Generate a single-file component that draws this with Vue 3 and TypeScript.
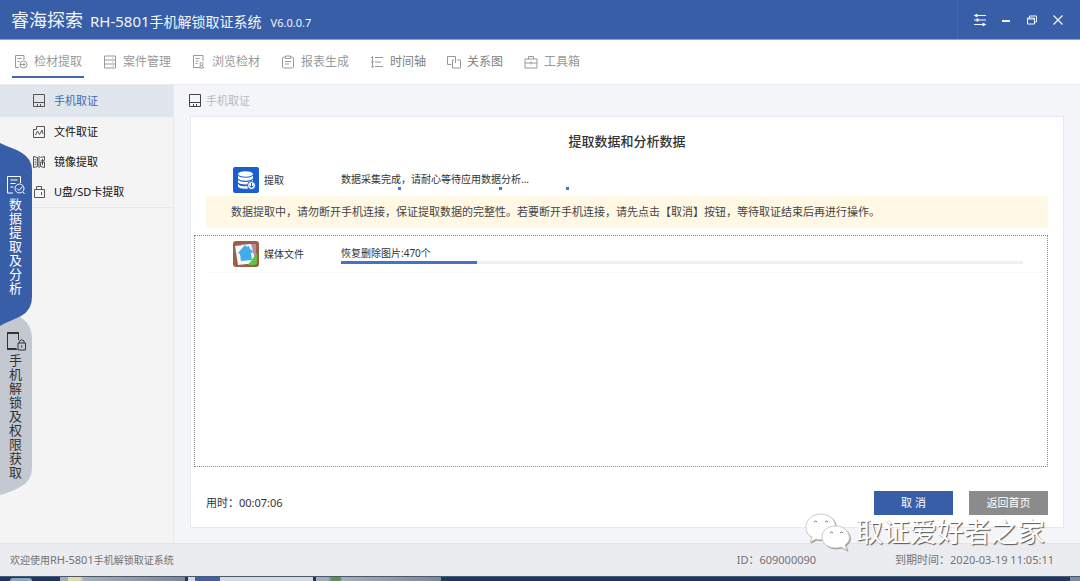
<script setup lang="ts">
import { ref } from 'vue'

interface Item {
  id: string
  label: string
  strong?: boolean
}

const navItems: Item[] = [
  { id: 'extract', label: '检材提取' },
  { id: 'cases', label: '案件管理' },
  { id: 'browse', label: '浏览检材' },
  { id: 'report', label: '报表生成' },
  { id: 'timeline', label: '时间轴', strong: true },
  { id: 'relation', label: '关系图', strong: true },
  { id: 'tools', label: '工具箱' },
]

const sideItems: Item[] = [
  { id: 'phone', label: '手机取证' },
  { id: 'file', label: '文件取证' },
  { id: 'image', label: '镜像提取' },
  { id: 'usb', label: 'U盘/SD卡提取' },
]

const activeNav = ref('extract')
const activeSide = ref('phone')
const progress = ref(20)
</script>

<template>
  <div class="app">
    <header class="titlebar">
      <strong class="brand">睿海探索</strong>
      <h1 class="product"><span class="model">RH-5801</span>手机解锁取证系统</h1>
      <span class="version">V6.0.0.7</span>
      <div class="window-controls">
        <button type="button" aria-label="设置">
          <svg width="14" height="14" viewBox="0 0 14 14"><path d="M1 2.500h12M1 7h12M1 11.500h12" /><path d="M3.500 1v3M4.500 5.500v3M10.500 10v3" stroke-width="2" /></svg>
        </button>
        <button type="button" aria-label="最小化">
          <svg width="14" height="14" viewBox="0 0 14 14"><path d="M3 8h8" stroke-width="2" /></svg>
        </button>
        <button type="button" aria-label="还原">
          <svg width="14" height="14" viewBox="0 0 14 14"><path d="M2.500 5h7v6h-7zM2.500 6h7M4.500 5V3h7v6h-2" /></svg>
        </button>
        <button type="button" aria-label="关闭">
          <svg width="14" height="14" viewBox="0 0 14 14"><path d="M2.500 2.500l9 9M11.500 2.500l-9 9" stroke-width="1.300" /></svg>
        </button>
      </div>
    </header>

    <nav class="topnav">
      <button
        v-for="item in navItems"
        :key="item.id"
        type="button"
        class="nav-item"
        :class="{ active: item.id === activeNav, strong: item.strong }"
        @click="activeNav = item.id"
      >
        <svg width="14" height="14" viewBox="0 0 14 14">
          <template v-if="item.id === 'extract'">
            <path d="M5 12.500H1.500v-12h8.500V5M3.500 3.500h4M3.500 6.500h2" /><circle cx="9.500" cy="9.500" r="3.500" /><path d="M6 9.500h5M9.500 8l1.500 1.500L9.500 11" />
          </template>
          <path v-else-if="item.id === 'cases'" d="M1.500 1h11v12h-11zM1.500 5h11M1.500 9h11M9.500 3h1M9.500 7h1M9.500 11h1" />
          <path v-else-if="item.id === 'browse'" d="M7 12.500H1.500v-12h9.500V6M3.500 3.500h4M3.500 6h3M3.500 8.500h2M9.500 7.500a1 1 0 0 1 0 3a1 1 0 0 1 0-3M7.500 13c0-3 4-3 4 0z" />
          <path v-else-if="item.id === 'report'" d="M4.500 2h-2l-1 1v9l1 1h9l1-1V3l-1-1h-2M4.500 1h5v2.500h-5zM4 6.500h6M4 9h4" />
          <path v-else-if="item.id === 'timeline'" d="M1 3l1.500-1.500V12M5 2.500h8M5 7h6M5 11.500h8M1 7h3M1 12h3" />
          <path v-else-if="item.id === 'relation'" d="M4.500 9.500h-4v-8h8v3M7 5H5.500v8h8V5H10M8.500 4v4" />
          <path v-else d="M1 4h12v9H1zM4.500 4V1.500h5V4M1 8h4M9 8h4M5 8h4M7 6.500v3" />
        </svg>
        <span>{{ item.label }}</span>
      </button>
    </nav>

    <div class="body">
      <aside class="sidebar">
        <ul class="side-list">
          <li v-for="item in sideItems" :key="item.id">
            <button
              type="button"
              class="side-item"
              :class="{ active: item.id === activeSide }"
              @click="activeSide = item.id"
            >
              <svg width="14" height="14" viewBox="0 0 14 14">
                <path v-if="item.id === 'phone'" d="M1.500 .500h11v12h-11zM1.500 8.500h11M5.500 10v2.500M8.500 10v2.500" />
                <path v-else-if="item.id === 'file'" d="M1.500 4.500h3v-3h8v11h-11zM3.500 10l2-4 2 3.500 2.500-4.500 1 4" />
                <path v-else-if="item.id === 'image'" d="M1.500 1.500l4 1v9l-4 1zM2.500 4.500l2 .500M2.500 7h2M2.500 9.500l2-.500M7 1v12M8.500 2.500l4-1v4l-4 .500M12.500 7l-4 .500v4l4 1zM10.500 4v6" />
                <path v-else d="M2.500 4.500h10v8h-10zM4.500 4.500v-3h5v3M9.500 7v3" />
              </svg>
              <span>{{ item.label }}</span>
            </button>
          </li>
        </ul>

        <div class="mode-tabs">
          <button type="button" class="mode-tab data-tab">
            <svg class="tab-shape" viewBox="0 0 33 184" preserveAspectRatio="none"><path d="M0 0C8 4 16 6 22 10Q32 16 32 27V154Q32 167 21 173C14 177 8 178 0 183Z" /></svg>
            <svg class="tab-icon" width="20" height="20" viewBox="0 0 20 20"><path d="M7 18H1.500V1.500h13V8M4.500 5h7M4.500 8.500h5M4.500 12h3M17 17l1.500 2" /><circle cx="13.500" cy="13.500" r="4.500" /><path d="M11 13.500l2 2 3.500-4" /></svg>
            <span class="tab-label">数据提取及分析</span>
          </button>
          <button type="button" class="mode-tab unlock-tab">
            <svg class="tab-shape" viewBox="0 0 33 184" preserveAspectRatio="none"><path d="M0 0H20Q32 7 32 22V151Q32 164 20 170C13 174 7 176 0 178Z" /></svg>
            <svg class="tab-icon" width="20" height="20" viewBox="0 0 20 20"><path d="M11 18.500H1.500v-17h11V9" /><path d="M1.500 2h11M1.500 18h9" stroke-width="2" /><path d="M12 12h7.500v7H12zM13.500 12v-2q2.200-2.500 4.500 0v2M15.700 14.500v2" /></svg>
            <span class="tab-label">手机解锁及权限获取</span>
          </button>
        </div>
      </aside>

      <main class="content">
        <div class="crumb">
          <svg width="14" height="14" viewBox="0 0 14 14"><path d="M1.500 .500h11v12h-11zM1.500 8.500h11M5.500 10v2.500M8.500 10v2.500" /></svg>
          <span>手机取证</span>
        </div>

        <section class="panel">
          <h2 class="panel-title">提取数据和分析数据</h2>

          <div class="task">
            <svg class="task-icon" width="26" height="26" viewBox="0 0 26 26">
              <rect width="26" height="26" rx="2" fill="#1b5fce" />
              <g fill="#fff">
                <ellipse cx="12.500" cy="7" rx="7.500" ry="2.800" />
                <path d="M5 8.500c2 3 13 3 15 0v3c-2 3-13 3-15 0zM5 12.800c2 3 13 3 15 0v2.500c-2 3-13 3-15 0zM5 16.800c2 3 8 3 10 1.500v3.200c-4 .600-9 0-10-1.700z" />
              </g>
              <circle cx="18.500" cy="18.500" r="4" fill="#fff" stroke="#1b5fce" />
              <path d="M18.500 16v4M16.500 18.500l2 2 2-2" fill="none" stroke="#1b5fce" />
            </svg>
            <span class="task-name">提取</span>
            <div class="task-status">
              <p>数据采集完成，请耐心等待应用数据分析...</p>
              <div class="busy"><i class="lead"></i><i></i><i class="trail"></i></div>
            </div>
          </div>

          <p class="notice">数据提取中，请勿断开手机连接，保证提取数据的完整性。若要断开手机连接，请先点击【取消】按钮，等待取证结束后再进行操作。</p>

          <div class="task-list">
            <div class="task">
              <svg class="task-icon" width="26" height="26" viewBox="0 0 26 26">
                <rect width="26" height="26" rx="3" fill="#9b6049" />
                <path d="M8 3h15v19z" fill="#b98a9c" />
                <path d="M2 5l16-2 5 19-18 2z" fill="#f5f8f3" />
                <path d="M5 12l7-8 2 2 2-1 1 3 4 3-3 1 1 7-11 1-1-7z" fill="#41aeea" />
                <path d="M15 24l9-12v9q0 3-3 3z" fill="#63bf46" />
              </svg>
              <span class="task-name">媒体文件</span>
              <div class="task-status">
                <p>恢复删除图片:470个</p>
                <div class="track" role="progressbar" aria-label="媒体文件" :aria-valuenow="progress">
                  <div class="bar" :style="{ width: progress + '%' }"></div>
                </div>
              </div>
            </div>
          </div>

          <div class="panel-foot">
            <span class="elapsed">用时：00:07:06</span>
            <button type="button" class="btn primary">取 消</button>
            <button type="button" class="btn muted">返回首页</button>
          </div>
        </section>
      </main>
    </div>

    <footer class="statusbar">
      <span class="welcome">欢迎使用<span class="model">RH-5801</span>手机解锁取证系统</span>
      <span class="device">ID：609000090</span>
      <span>到期时间：2020-03-19 11:05:11</span>
    </footer>

    <div class="taskbar">
      <i class="start"></i>
      <i class="window folder"></i>
      <i class="window current"></i>
      <i class="window green"></i>
      <i class="corner"></i>
    </div>

    <div class="watermark">
      <svg width="46" height="38" viewBox="0 0 46 38">
        <path d="M16 1C7 1 1 7 1 14c0 5 2 8 6 10l-2 5 6-3c3 1 5 1 8 0C31 25 32 15 29 8 26 3 21 1 16 1z" />
        <path d="M31 13c-9 0-14 5-14 11 0 8 9 13 19 10l6 3-2-5c4-3 5-6 4-10-2-6-7-9-13-9z" />
        <path class="eyes" d="M9 9q2-2 3 0M20 9q2-2 3 0M25 20q2-2 3 0M35 20q2-2 3 0" />
      </svg>
      <span>取证爱好者之家</span>
    </div>
  </div>
</template>

<style>
body {
  margin: 0;
}
</style>

<style scoped>
.app {
  position: relative;
  display: flex;
  flex-direction: column;
  min-height: 100vh;
  overflow: hidden;
  color: #333;
  background: #f4f5f9;
  font-family: "Noto Sans", "Noto Sans CJK SC", sans-serif;
  font-size: 11px;
  line-height: 16px;
}

* {
  box-sizing: border-box;
}

h1, h2, p, ul {
  margin: 0;
  padding: 0;
  font-weight: 400;
}

button {
  padding: 0;
  border: 0;
  background: none;
  color: inherit;
  font: inherit;
  cursor: pointer;
}

svg {
  flex: none;
  fill: none;
  stroke: currentColor;
}

.titlebar {
  display: flex;
  align-items: center;
  height: 40px;
  padding-left: 11px;
  border-bottom: 1px solid #8ba4d5;
  background: #385ea8;
  color: #f2f5fb;
}

.brand {
  font-size: 18px;
  font-weight: 400;
  line-height: 24px;
}

.product {
  margin-left: 7px;
  padding-top: 4px;
  font-size: 14px;
  line-height: 20px;
}

.product .model {
  font-size: 15px;
}

.version {
  margin-left: 9px;
  padding-top: 6px;
}

.window-controls {
  display: flex;
  align-self: stretch;
  align-items: center;
  gap: 12px;
  margin-left: auto;
  padding: 0 15px;
  border-left: 1px solid #4368ae;
}

.window-controls button {
  display: flex;
}

.topnav {
  display: flex;
  gap: 17px;
  height: 45px;
  padding: 8px 12px 6px;
  border-bottom: 1px solid #e9ebef;
  background: #fff;
  color: #999;
  font-size: 12px;
}

.nav-item {
  display: flex;
  align-items: center;
  gap: 6px;
  padding: 0 2px;
  border-bottom: 2px solid transparent;
}

.nav-item.active {
  border-bottom-color: #4468ae;
}

.nav-item.strong {
  color: #808080;
}

.nav-item svg {
  color: #999;
}

.body {
  display: flex;
  flex: 1;
}

.sidebar {
  position: relative;
  flex: none;
  width: 174px;
  border-right: 1px solid #e8e8eb;
  background: #f4f4f5;
}

.side-list {
  border-bottom: 1px solid #e9e9eb;
  list-style: none;
}

.side-item {
  display: flex;
  align-items: center;
  gap: 8px;
  width: 100%;
  height: 30px;
  padding-left: 32px;
  color: #111;
  text-align: left;
}

.side-item svg {
  color: #555;
}

.side-item.active {
  height: 32px;
  background: #e1e5ee;
  color: #4568ad;
}

.mode-tabs {
  position: absolute;
  top: 58px;
  left: 0;
  width: 33px;
}

.mode-tab {
  position: relative;
  display: flex;
  flex-direction: column;
  align-items: center;
  width: 33px;
  height: 184px;
  padding: 32px 2px 0 0;
}

.data-tab {
  z-index: 1;
  color: #fff;
}

.unlock-tab {
  margin-top: -10px;
  padding-top: 14px;
  color: #333;
}

.tab-shape {
  position: absolute;
  inset: 0;
  width: 100%;
  height: 100%;
  stroke: none;
}

.data-tab .tab-shape {
  fill: #385ea8;
}

.unlock-tab .tab-shape {
  fill: #c4c8d0;
}

.tab-icon,
.tab-label {
  position: relative;
}

.tab-label {
  width: 13px;
  margin-top: 2px;
  font-size: 13px;
  line-height: 14px;
  overflow-wrap: anywhere;
}

.content {
  display: flex;
  flex: 1;
  flex-direction: column;
  min-width: 0;
  padding: 8px 16px 15px 16px;
}

.crumb {
  display: flex;
  align-items: center;
  gap: 4px;
  height: 16px;
  margin-left: -2px;
  color: #b8b9bd;
}

.crumb svg {
  color: #444;
}

.panel {
  display: flex;
  flex: 1;
  flex-direction: column;
  margin-top: 7px;
  padding: 14px 15px 12px 3px;
  border: 1px solid #e8e9ec;
  background: #fff;
}

.panel-title {
  padding-left: 12px;
  font-size: 13px;
  font-weight: 500;
  line-height: 20px;
  text-align: center;
}

.task {
  display: grid;
  grid-template-columns: 26px 72px 1fr;
  column-gap: 5px;
  align-items: center;
  margin-left: 39px;
}

.panel > .task {
  margin-top: 16px;
}

.task-icon {
  stroke: none;
}

.task-name,
.task-status {
  font-size: 10px;
}

.busy {
  display: flex;
  gap: 98px;
  height: 3px;
}

.busy i {
  width: 3px;
  height: 3px;
  background: #4a74cc;
}

.busy .lead {
  margin-left: 57px;
}

.busy .trail {
  margin-left: -34px;
}

.notice {
  margin: 3px 0 0 12px;
  padding: 8px 25px;
  background: #fff8e5;
  color: #444;
}

.task-list {
  flex: 1;
  margin-top: 7px;
  border: 1px dotted #888;
}

.task-list .task {
  margin-left: 12px;
  padding: 5px 24px 5px 26px;
  border-bottom: 1px solid #f8f8f9;
}

.track {
  height: 3px;
  background: #edf1f5;
}

.bar {
  height: 100%;
  background: #4671c6;
}

.panel-foot {
  display: flex;
  align-items: center;
  gap: 16px;
  margin: 24px 0 0 12px;
}

.elapsed {
  margin-right: auto;
}

.btn {
  width: 79px;
  height: 24px;
  color: #fff;
}

.primary {
  background: #385ea8;
}

.muted {
  background: #8b8b8b;
}

.statusbar {
  display: flex;
  align-items: center;
  height: 33px;
  padding: 0 26px 0 10px;
  border-top: 1px solid #e2e3e6;
  background: #ebecf0;
  color: #737373;
}

.welcome {
  margin-right: auto;
  font-size: 10px;
}

.welcome .model {
  font-size: 11px;
}

.device {
  margin-right: 79px;
}

.taskbar {
  display: flex;
  gap: 3px;
  height: 5px;
  border-top: 1px solid #4c5a70;
  background: #19376b;
}

.start {
  width: 22px;
  margin: 1px 25px 0 10px;
  border-radius: 11px 11px 0 0;
  background: #84a8cb;
}

.window {
  width: 125px;
  background: linear-gradient(90deg, #a4adba, #7b879b);
}

.folder {
  background: linear-gradient(90deg, #a4adba 8px, #e3dda0 8px, #e3dda0 20px, #a4adba 24px, #7b879b);
}

.current {
  background: linear-gradient(90deg, #d5dae1 7px, #3b60b3 7px, #3b60b3 32px, #d5dae1 32px);
}

.green {
  background: linear-gradient(90deg, #a4adba 12px, #5c9440 16px, #5c9440 24px, #a4adba 26px, #7b879b);
}

.corner {
  width: 10px;
  margin-left: auto;
  background: #7b8ba4;
}

.watermark {
  position: absolute;
  right: 35px;
  bottom: 30px;
  display: flex;
  align-items: center;
  gap: 5px;
  color: #fff;
  font-size: 27px;
  line-height: 36px;
  text-shadow: 1px 1px 1px #555;
  pointer-events: none;
}

.watermark svg {
  fill: #fff;
  stroke: #ccc;
  filter: drop-shadow(1px 1px 0 #999);
}

.watermark .eyes {
  fill: none;
  stroke: #777;
}
</style>
